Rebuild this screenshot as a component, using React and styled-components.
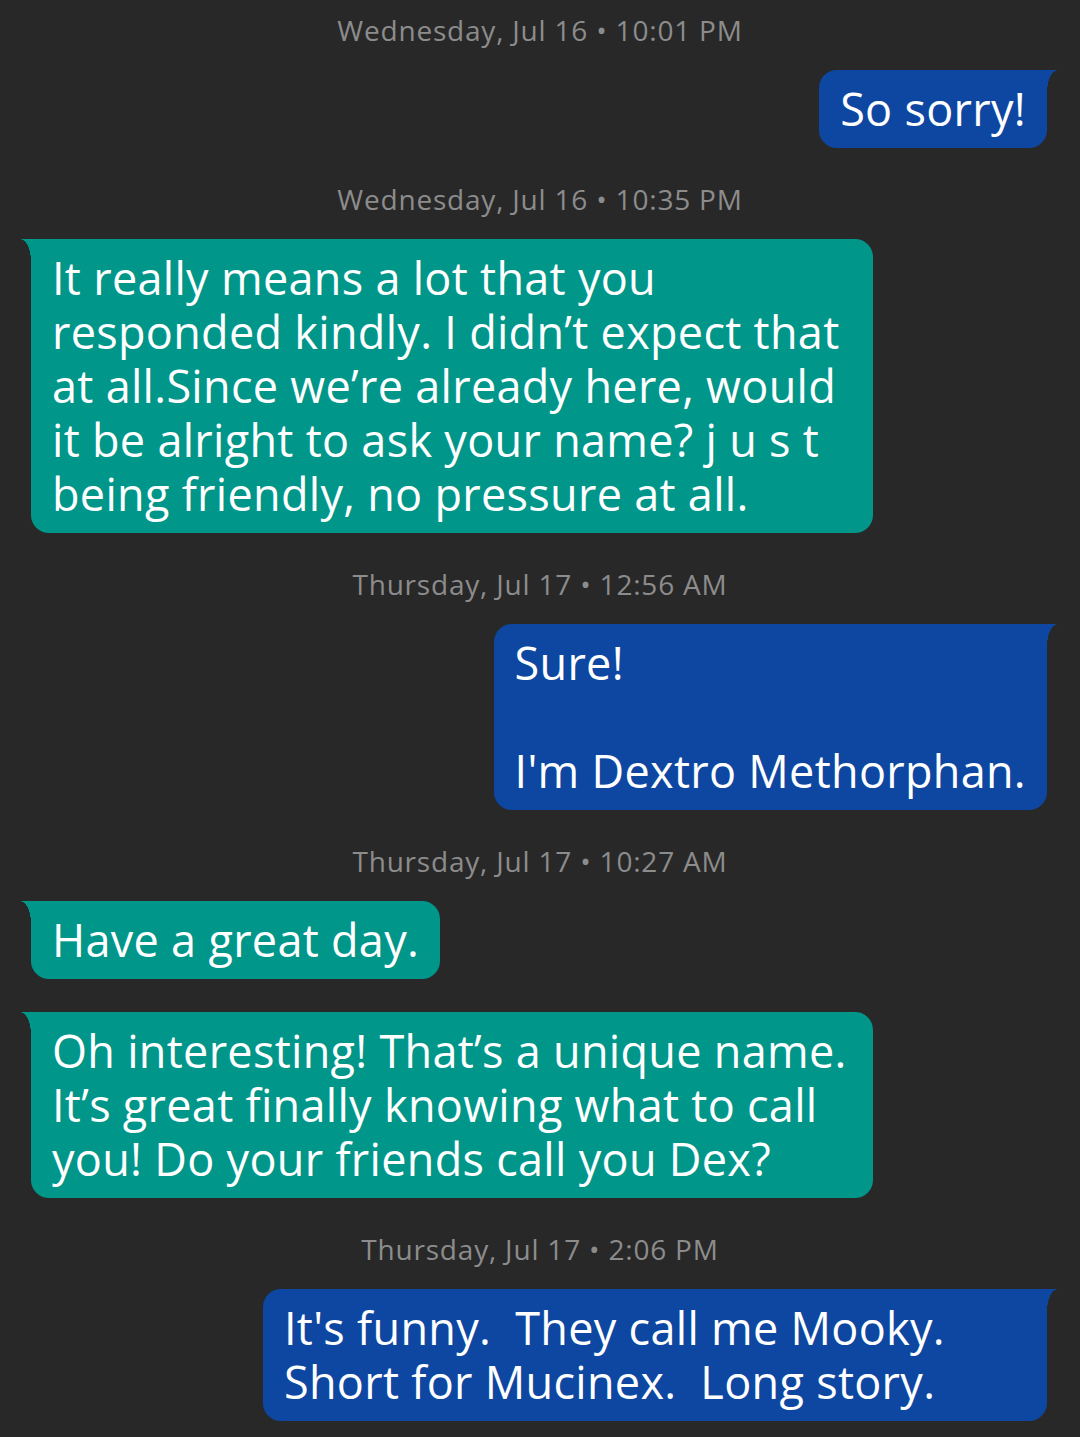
import React from 'react';
import styled, { createGlobalStyle } from 'styled-components';

const GlobalStyle = createGlobalStyle`
  html, body {
    margin: 0;
    padding: 0;
    background: #282828;
  }
  body {
    font-family: "Open Sans", "Noto Sans", sans-serif;
  }
`;

const Thread = styled.div`
  display: flex;
  flex-direction: column;
  padding: 12px 0 0;
  min-height: 1437px;
  box-sizing: border-box;
  background: #282828;
`;

const Stamp = styled.div`
  text-align: center;
  color: #8c8c8c;
  font-size: 28px;
  letter-spacing: 0.8px;
  line-height: 36px;
  margin-bottom: 22px;
`;

const Bubble = styled.div`
  position: relative;
  align-self: ${p => (p.$sent ? 'flex-end' : 'flex-start')};
  margin: ${p => (p.$sent ? '0 33px 33px 0' : '0 0 33px 31px')};
  width: ${p => p.$width || 'auto'};
  max-width: 842px;
  box-sizing: border-box;
  padding: 12px 21px;
  background: ${p => (p.$sent ? '#0d47a1' : '#00968a')};
  color: #ffffff;
  font-size: 45px;
  letter-spacing: 0.3px;
  line-height: 54px;
  white-space: pre;
  border-radius: ${p => (p.$sent ? '18px 0 18px 18px' : '0 18px 18px 18px')};

  &::before {
    content: '';
    position: absolute;
    top: 0;
    width: 11px;
    height: 22px;
    ${p =>
      p.$sent
        ? `right: -11px;
           background: radial-gradient(11px 22px at 100% 100%, transparent 98%, #0d47a1 100%);`
        : `left: -11px;
           background: radial-gradient(11px 22px at 0% 100%, transparent 98%, #00968a 100%);`}
  }
`;

const messages = [
  { stamp: 'Wednesday, Jul 16 • 10:01 PM' },
  { sent: true, text: 'So sorry!' },
  { stamp: 'Wednesday, Jul 16 • 10:35 PM' },
  {
    width: '842px',
    text:
      'It really means a lot that you\nresponded kindly. I didn’t expect that\nat all.Since we’re already here, would\nit be alright to ask your name? j u s t\nbeing friendly, no pressure at all.',
  },
  { stamp: 'Thursday, Jul 17 • 12:56 AM' },
  { sent: true, text: 'Sure!\n\nI\'m Dextro Methorphan.' },
  { stamp: 'Thursday, Jul 17 • 10:27 AM' },
  { text: 'Have a great day.' },
  {
    width: '842px',
    text:
      'Oh interesting! That’s a unique name.\nIt’s great finally knowing what to call\nyou! Do your friends call you Dex?',
  },
  { stamp: 'Thursday, Jul 17 • 2:06 PM' },
  {
    sent: true,
    width: '784px',
    text: "It's funny.  They call me Mooky.\nShort for Mucinex.  Long story.",
  },
];

export default function App() {
  return (
    <>
      <GlobalStyle />
      <Thread>
        {messages.map((m, i) =>
          m.stamp ? (
            <Stamp key={i}>{m.stamp}</Stamp>
          ) : (
            <Bubble key={i} $sent={m.sent} $width={m.width}>
              {m.text}
            </Bubble>
          )
        )}
      </Thread>
    </>
  );
}
